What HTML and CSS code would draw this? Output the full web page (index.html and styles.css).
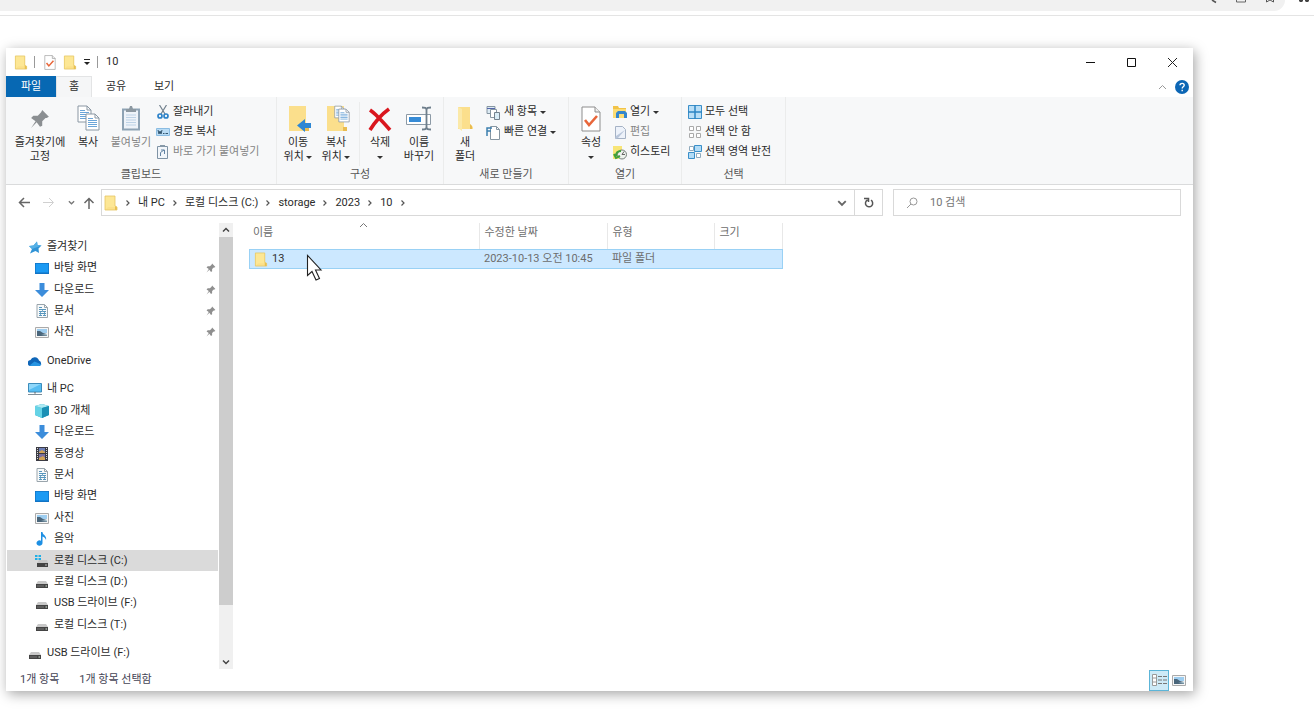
FILE: index.html
```html
<!DOCTYPE html>
<html lang="ko">
<head>
    <meta charset="UTF-8">
    <meta name="viewport" content="width=device-width, initial-scale=1.0">
    <title>10</title>
    <link rel="stylesheet" href="styles.css">
</head>
<body>

<!-- Shared icons -->
<svg class="sprite" aria-hidden="true">
    <symbol id="folder" viewBox="0 0 14 16">
        <path d="M1 1h10v10l2 1v3H1z" fill="#fbe08a"/>
        <path d="M1 1h10v11H4L1 15z" fill="#fde795"/>
        <path d="M11 11l2 1v3h-2z" fill="#e9bf4f"/>
        <path d="M1 1h10v10l2 1v3H1z" fill="none" stroke="#e6c563" stroke-width=".8"/>
    </symbol>
    <symbol id="checkdoc" viewBox="0 0 20 26">
        <path d="M1 1h13l5 5v19H1z" fill="#fff" stroke="#8d8d8d"/>
        <path d="M14 1v5h5" fill="#eee" stroke="#8d8d8d"/>
        <path d="M4 14l4 5 8-9" fill="none" stroke="#e8663a" stroke-width="2.6"/>
    </symbol>
    <symbol id="pin" viewBox="0 0 18 18">
        <path d="M11 1l6 6-2 1-1 0-3 3 0 4-2 1-3-4-5 5 4-6-4-3 2-2 4 0 3-3z" fill="currentColor"/>
    </symbol>
    <symbol id="page" viewBox="0 0 15 18">
        <path d="M1 1h9l4 4v12H1z" fill="#fff" stroke="#8a97a3"/>
        <path d="M10 1v4h4" fill="none" stroke="#8a97a3"/>
        <path d="M3 5.500h5M3 7.500h9M3 9.500h9M3 11.500h9M3 13.500h9" stroke="#6ba5d8"/>
    </symbol>
    <symbol id="chevron" viewBox="0 0 8 8">
        <path d="M1 2.500l3 3 3-3" fill="none" stroke="currentColor" stroke-width="1.500"/>
    </symbol>
    <symbol id="crumb" viewBox="0 0 6 8">
        <path d="M1.500 1.500L4 4 1.500 6.500" fill="none" stroke="#555" stroke-width="1.200"/>
    </symbol>
    <symbol id="star" viewBox="0 0 14 14">
        <path d="M9 1.500l.5 3.500 4 .5-3 3 .5 4.500-3.500-2L2 13.500 4 9 1 6l4.500-.5z" fill="#2f93d6"/>
        <path d="M9 1.500l.5 3.500 4 .5L4 9 1 6l4.500-.5z" fill="#55b0e6"/>
    </symbol>
    <symbol id="desktop" viewBox="0 0 14 14">
        <path d="M0 2h14v11H0z" fill="#1173c4"/>
        <path d="M.7 2.700h12.600v8.800H.7z" fill="#1b9af3"/>
    </symbol>
    <symbol id="download" viewBox="0 0 14 14">
        <path d="M4.500 0h5v7H14l-7 7-7-7h4.500z" fill="#3c8ddb"/>
    </symbol>
    <symbol id="document" viewBox="0 0 14 14">
        <path d="M2 .5h7.500l3 3v10H2z" fill="#f8fafb" stroke="#9aa5ac"/>
        <path d="M9.500.5v3h3" fill="none" stroke="#9aa5ac"/>
        <path d="M4 3.500h3M4 5.500h7M4 7.500h3M8 7.500h3M4 9.500h7M4 11.500h3M8 11.500h3" stroke="#5796bd"/>
        <path d="M7.500 5v3M5.500 8v3M9.500 8v3" stroke="#5796bd" stroke-width=".8"/>
    </symbol>
    <symbol id="picture" viewBox="0 0 14 14">
        <path d="M.5 2.500h13v10H.5z" fill="#f6f6f6" stroke="#aaa"/>
        <path d="M2 4h10v4H2z" fill="#9dcdf0"/>
        <path d="M2 6l3 0 3 2 4 1v2H2z" fill="#49657a"/>
        <path d="M6 10l6-1v1.500z" fill="#b9d2dd"/>
    </symbol>
    <symbol id="cloud" viewBox="0 0 14 14">
        <path d="M3 12a3 3 0 0 1-.5-6 4.500 4.500 0 0 1 8.500.5 3 3 0 0 1 .5 5.500z" fill="#0f66b8"/>
        <path d="M1.500 11.500l5-4 7 3a3 3 0 0 1-2.500 1.500H3z" fill="#2795e2"/>
    </symbol>
    <symbol id="pc" viewBox="0 0 14 14">
        <path d="M.5 1.500h13v8.500H.5z" fill="#56bdf2" stroke="#3c8cbb"/>
        <path d="M1 2h12L1 8z" fill="#8fd7fa"/>
        <path d="M6 10h2v1.500H6zM0 12h14v1H0z" fill="#7f8e98"/>
    </symbol>
    <symbol id="cube" viewBox="0 0 14 14">
        <path d="M7 0l7 2v9l-7 3-7-3V2z" fill="#22a6c5"/>
        <path d="M0 2l7 2v10l-7-3z" fill="#65d3e6"/>
        <path d="M0 2l7-2 7 2-7 2z" fill="#aeeaf3"/>
        <path d="M14 2v9l-7 3V4z" fill="#1b90b5"/>
    </symbol>
    <symbol id="video" viewBox="0 0 14 14">
        <path d="M1 0h12v14H1z" fill="#3b3b43"/>
        <path d="M4 1h6v5H4z" fill="#6d7fb8"/>
        <path d="M4 7h6v6H4z" fill="#7b6fa0"/>
        <path d="M4 5l3-2 3 2v1H4zM4 11l4-2 2 2v2H4z" fill="#d3a354"/>
        <path d="M2.500 1v12M11.500 1v12" stroke="#d9d9d9" stroke-dasharray="1 1"/>
    </symbol>
    <symbol id="music" viewBox="0 0 14 14">
        <path d="M6 0h1.500c0 3 4.500 3.500 3.500 8-.5-2-2-3-3.500-3.500V11a3 2.700 0 1 1-1.500-2.300z" fill="#1d8fe3"/>
    </symbol>
    <symbol id="drive" viewBox="0 0 14 14">
        <path d="M3 6h8l2 3H1z" fill="#c8c8c8"/>
        <path d="M1 9h12v4H1z" fill="#444"/>
        <path d="M2 11h7" stroke="#777"/>
        <path d="M10.500 11H12" stroke="#d8e6d8"/>
    </symbol>
    <symbol id="osdrive" viewBox="0 0 14 14">
        <path d="M4 6h8l1 3H2z" fill="#c8c8c8"/>
        <path d="M2 9h11v4H2z" fill="#444"/>
        <path d="M10 11h2" stroke="#bbb"/>
        <path d="M0 1h2.500v2H0zM3.500 1H6v2H3.500zM0 4h2.500v2H0zM3.500 4H6v2H3.500z" fill="#20afe6"/>
    </symbol>
</svg>

<!-- Bottom edge of the browser toolbar -->
<div class="browser-bar">
    <div class="browser-url">
        <svg width="12" height="4"><path d="M6 0l4 2.500" stroke="#555" stroke-width="1.500"/></svg>
        <svg width="12" height="4"><path d="M1.500 0v2h9V0" fill="none" stroke="#666"/></svg>
        <svg width="12" height="4"><path d="M2.500 0v2l3.500-2 3.500 2V0" fill="none" stroke="#555"/></svg>
    </div>
    <svg class="browser-ext" width="14" height="4"><path d="M1 0h4v1l-1 1H2L1 1zM7 0h4v1l-1 1H8L7 1z" fill="#444"/></svg>
</div>

<main class="window">
    <header class="titlebar">
        <svg width="14" height="15"><use href="#folder"/></svg>
        <span class="title-sep"></span>
        <button class="quick" aria-label="속성"><svg width="14" height="15"><use href="#checkdoc"/></svg></button>
        <button class="quick" aria-label="새 폴더"><svg width="14" height="15"><use href="#folder"/></svg></button>
        <button class="quick" aria-label="빠른 실행 도구 모음"><svg width="8" height="8"><path d="M1 1.500h6" stroke="#222"/><path d="M1 4h6L4 7z" fill="#222"/></svg></button>
        <span class="title-sep"></span>
        <h1>10</h1>
        <div class="window-buttons">
            <button aria-label="최소화"><svg width="11" height="11"><path d="M1 5.500h9" stroke="#111"/></svg></button>
            <button aria-label="최대화"><svg width="11" height="11"><path d="M1.500 1.500h8v8h-8z" fill="none" stroke="#111"/></svg></button>
            <button aria-label="닫기"><svg width="11" height="11"><path d="M1 1l9 9M10 1l-9 9" stroke="#222"/></svg></button>
        </div>
    </header>

    <nav class="tabs">
        <button class="tab file">파일</button>
        <button class="tab active">홈</button>
        <button class="tab">공유</button>
        <button class="tab">보기</button>
        <div class="tab-tools">
            <button aria-label="리본 최소화"><svg width="9" height="8"><path d="M1 6l3.500-3.500L8 6" fill="none" stroke="#999"/></svg></button>
            <button aria-label="도움말"><svg width="14" height="14" viewBox="0 0 14 14"><circle cx="7" cy="7" r="7" fill="#0c66b5"/><path d="M5 5.200c0-2.500 4.200-2.300 4.200 0C9.200 6.800 7.200 6.800 7.200 8.500M7.200 9.800v1.400" fill="none" stroke="#fff" stroke-width="1.400"/></svg></button>
        </div>
    </nav>

    <section class="ribbon">
        <div class="group clipboard">
            <div class="tools">
                <button class="big wide"><svg class="gray" width="20" height="20"><use href="#pin"/></svg><span>즐겨찾기에<br>고정</span></button>
                <button class="big"><svg width="24" height="28" viewBox="0 0 24 28"><use href="#page" x="1" y="0" width="15" height="18"/><use href="#page" x="9" y="8" width="15" height="18"/></svg><span>복사</span></button>
                <button class="big paste" disabled><svg width="20" height="28" viewBox="0 0 20 28"><path d="M2 4.500h16v20H2z" fill="#eef3f9" stroke="#8ea3b5" stroke-width="2"/><path d="M5 10h10M5 12.500h10M5 15h10M5 17.500h10M5 20h10" stroke="#bdd2e6"/><path d="M5 4h3l1-3h2l1 3h3v3H5z" fill="#8c98a1"/></svg><span>붙여넣기</span></button>
                <div class="small-list">
                    <button><svg width="14" height="14" viewBox="0 0 14 14"><path d="M3.500 0l5.500 9M10.500 0L5 9" stroke="#72818e" stroke-width="1.200"/><circle cx="4" cy="11" r="2" fill="none" stroke="#2c82c9" stroke-width="1.700"/><circle cx="10" cy="11" r="2" fill="none" stroke="#2c82c9" stroke-width="1.700"/></svg>잘라내기</button>
                    <button><svg width="14" height="14" viewBox="0 0 14 14"><path d="M.5 3.500h13v7H.5z" fill="#b9dcf5" stroke="#8abce2"/><path d="M2 5l1 4 1-3 1 3 1-4M7 8.500h1.500M9.500 8.500H12" fill="none" stroke="#31546e"/></svg>경로 복사</button>
                    <button disabled><svg width="14" height="16" viewBox="0 0 14 16"><path d="M1.500 2.500h10v12h-10z" fill="#f2f6fa" stroke="#7f93a5"/><path d="M4 1h5v2H4z" fill="#8799a8"/><path d="M4.500 12V8.500L8 6M5 6h3.500v4" fill="none" stroke="#6383a3"/></svg>바로 가기 붙여넣기</button>
                </div>
            </div>
            <h2>클립보드</h2>
        </div>
        <div class="group">
            <div class="tools">
                <button class="big narrow"><svg width="26" height="28" viewBox="0 0 26 28"><path d="M4 1h17v22l3 3H4z" fill="#fbdf8c"/><path d="M20 22h4v4h-4z" fill="#e9bc51"/><path d="M26 18h-6v-4l-8 6.500 8 6.500v-4h6z" fill="#2d87d4"/></svg><span>이동<br>위치 <i class="caret"></i></span></button>
                <button class="big narrow"><svg width="28" height="28" viewBox="0 0 28 28"><path d="M5 1h17v22l3 3H5z" fill="#fbdf8c"/><path d="M21 22h4v4h-4z" fill="#e9bc51"/><use href="#page" x="12" y="0" width="11" height="14"/><use href="#page" x="16" y="3" width="12" height="15"/></svg><span>복사<br>위치 <i class="caret"></i></span></button>
                <span class="divider"></span>
                <button class="big"><svg width="24" height="28" viewBox="0 0 24 28"><path d="M2 5c6 4 13 12 20 20M21 4C14 9 7 17 2 25" fill="none" stroke="#d9161e" stroke-width="3.600"/></svg><span>삭제<br><i class="caret"></i></span></button>
                <button class="big narrow"><svg width="26" height="28" viewBox="0 0 26 28"><path d="M.5 9.500h24v10H.5z" fill="#fff" stroke="#8c9aa6"/><path d="M3 12h12v5H3z" fill="#368bd6"/><path d="M16 2.500c3 0 4.500 0 4.500 3v16c0 3-1.500 3-4.500 3M25 2.500c-3 0-4.500 0-4.500 3v16c0 3 1.500 3 4.500 3" fill="none" stroke="#6f7f8c" stroke-width="1.800"/></svg><span>이름<br>바꾸기</span></button>
            </div>
            <h2>구성</h2>
        </div>
        <div class="group">
            <div class="tools">
                <button class="big narrow"><svg width="18" height="26" viewBox="0 0 18 26"><path d="M2 2h12v17l3 3v2H2z" fill="#fbdf8c"/><path d="M2 2l4 2v22l-4-3z" fill="#fbe9a8"/><path d="M14 19l2 2v3h-2z" fill="#e9bc51"/></svg><span>새<br>폴더</span></button>
                <div class="small-list">
                    <button><svg width="15" height="15" viewBox="0 0 15 15"><path d="M1 1.500h8v7H1z" fill="#dcebf4" stroke="#8696a2"/><path d="M1 3.500h8" stroke="#56a"/><path d="M4.500 4.500h6v8h-6z" fill="#fff" stroke="#8696a2"/><path d="M8.500 7.500h5v7h-5z" fill="#d9edf7" stroke="#74828e"/></svg>새 항목 <i class="caret"></i></button>
                    <button><svg width="15" height="15" viewBox="0 0 15 15"><path d="M4.500 1.500h6l3 3v10h-9z" fill="#fff" stroke="#8696a2"/><path d="M10.500 1.500v3h3" fill="none" stroke="#8696a2"/><path d="M1 11V3h5M1 6h4" fill="none" stroke="#3c7fae" stroke-width="1.500"/></svg>빠른 연결 <i class="caret"></i></button>
                </div>
            </div>
            <h2>새로 만들기</h2>
        </div>
        <div class="group">
            <div class="tools">
                <button class="big"><svg width="20" height="28" viewBox="0 0 20 28"><use href="#checkdoc" y="1" width="20" height="26"/></svg><span>속성<br><i class="caret"></i></span></button>
                <div class="small-list">
                    <button><svg width="14" height="14" viewBox="0 0 14 14"><path d="M0 1h5l1 2h7v10H0z" fill="#f2c348"/><path d="M0 4h13v9H0z" fill="#fbdc74"/><path d="M3 13V8l2-2h7l2 2v5h-3v-4H6v4z" fill="#3386cd"/></svg>열기 <i class="caret"></i></button>
                    <button disabled><svg width="14" height="15" viewBox="0 0 14 15"><path d="M2.500 1.500h7l3 3v9h-10z" fill="#edf2fa" stroke="#a5b2c5"/><path d="M12 5l-7 8-3 1 1-3z" fill="#b9c6da"/></svg>편집</button>
                    <button><svg width="14" height="15" viewBox="0 0 14 15"><path d="M0 1h9v9l-3 4H0z" fill="#f8e577"/><circle cx="9" cy="9.500" r="4.500" fill="#eef3ee" stroke="#75807a"/><path d="M9 9.500l2-3M9 9.500h3" fill="none" stroke="#666"/><path d="M3 11c0-3 2-5 5-5M1 9l2 4 4-2" fill="none" stroke="#41a03b" stroke-width="2"/></svg>히스토리</button>
                </div>
            </div>
            <h2>열기</h2>
        </div>
        <div class="group">
            <div class="tools">
                <div class="small-list first">
                    <button><svg width="14" height="14" viewBox="0 0 14 14"><path d="M.5.5h13v13H.5z" fill="#b9def6" stroke="#3a8fc9"/><path d="M7 0v14M0 7h14" stroke="#2d85c3" stroke-width="1.500"/></svg>모두 선택</button>
                    <button><svg width="14" height="14" viewBox="0 0 14 14"><path d="M1.500 1.500h4v4h-4zM8.500 1.500h4v4h-4zM1.500 8.500h4v4h-4zM8.500 8.500h4v4h-4z" fill="#fff" stroke="#aaa"/></svg>선택 안 함</button>
                    <button><svg width="14" height="14" viewBox="0 0 14 14"><path d="M1.500 1.500h4v4h-4zM8.500 8.500h4v4h-4z" fill="#fff" stroke="#8faabd"/><path d="M6.500.5h7v6h-7zM.5 7.500h6v6h-6z" fill="#b2dcf7" stroke="#3a8fc9"/></svg>선택 영역 반전</button>
                </div>
            </div>
            <h2>선택</h2>
        </div>
    </section>

    <div class="address-row">
        <div class="history">
            <button aria-label="뒤로"><svg width="12" height="11"><path d="M6 1L1.500 5.500 6 10M2 5.500h10" fill="none" stroke="#666" stroke-width="1.500"/></svg></button>
            <button aria-label="앞으로" disabled><svg width="12" height="11"><path d="M6 1l4.500 4.500L6 10M0 5.500h10" fill="none" stroke="#d0d0d0"/></svg></button>
            <button aria-label="최근 위치" class="recent"><svg width="7" height="7"><use href="#chevron"/></svg></button>
            <button aria-label="위로" class="up"><svg width="12" height="12"><path d="M1.500 6L6 1.500 10.500 6M6 2v10" fill="none" stroke="#666" stroke-width="1.500"/></svg></button>
        </div>
        <div class="address">
            <svg width="14" height="16"><use href="#folder"/></svg>
            <svg width="6" height="8"><use href="#crumb"/></svg>
            <a href="#">내 PC</a>
            <svg width="6" height="8"><use href="#crumb"/></svg>
            <a href="#">로컬 디스크 (C:)</a>
            <svg width="6" height="8"><use href="#crumb"/></svg>
            <a href="#">storage</a>
            <svg width="6" height="8"><use href="#crumb"/></svg>
            <a href="#">2023</a>
            <svg width="6" height="8"><use href="#crumb"/></svg>
            <a href="#">10</a>
            <svg width="6" height="8"><use href="#crumb"/></svg>
            <button class="drop" aria-label="이전 위치"><svg width="10" height="10"><use href="#chevron"/></svg></button>
            <button class="refresh" aria-label="새로 고침"><svg width="10" height="11" viewBox="0 0 10 11"><path d="M7 3.200A3.600 3.600 0 1 1 3.500 3M0 1.500h4.500V5" fill="none" stroke="#555" stroke-width="1.500"/></svg></button>
        </div>
        <label class="search">
            <svg width="12" height="12"><circle cx="7.500" cy="4.500" r="3.500" fill="none" stroke="#999"/><path d="M5 7l-4 4" stroke="#999"/></svg>
            <input type="search" placeholder="10 검색" aria-label="10 검색">
        </label>
    </div>

    <div class="content">
        <ul class="tree">
            <li class="root"><a href="#"><svg><use href="#star"/></svg>즐겨찾기</a></li>
            <li><a href="#"><svg><use href="#desktop"/></svg>바탕 화면</a><svg class="pin"><use href="#pin"/></svg></li>
            <li><a href="#"><svg><use href="#download"/></svg>다운로드</a><svg class="pin"><use href="#pin"/></svg></li>
            <li><a href="#"><svg><use href="#document"/></svg>문서</a><svg class="pin"><use href="#pin"/></svg></li>
            <li><a href="#"><svg><use href="#picture"/></svg>사진</a><svg class="pin"><use href="#pin"/></svg></li>
            <li class="root"><a href="#"><svg><use href="#cloud"/></svg>OneDrive</a></li>
            <li class="root"><a href="#"><svg><use href="#pc"/></svg>내 PC</a></li>
            <li><a href="#"><svg><use href="#cube"/></svg>3D 개체</a></li>
            <li><a href="#"><svg><use href="#download"/></svg>다운로드</a></li>
            <li><a href="#"><svg><use href="#video"/></svg>동영상</a></li>
            <li><a href="#"><svg><use href="#document"/></svg>문서</a></li>
            <li><a href="#"><svg><use href="#desktop"/></svg>바탕 화면</a></li>
            <li><a href="#"><svg><use href="#picture"/></svg>사진</a></li>
            <li><a href="#"><svg><use href="#music"/></svg>음악</a></li>
            <li class="selected"><a href="#"><svg><use href="#osdrive"/></svg>로컬 디스크 (C:)</a></li>
            <li><a href="#"><svg><use href="#drive"/></svg>로컬 디스크 (D:)</a></li>
            <li><a href="#"><svg><use href="#drive"/></svg>USB 드라이브 (F:)</a></li>
            <li><a href="#"><svg><use href="#drive"/></svg>로컬 디스크 (T:)</a></li>
            <li class="root"><a href="#"><svg><use href="#drive"/></svg>USB 드라이브 (F:)</a></li>
        </ul>
        <div class="scrollbar">
            <svg class="flip" width="8" height="8"><use href="#chevron"/></svg>
            <div class="track"><div class="thumb"></div></div>
            <svg width="8" height="8"><use href="#chevron"/></svg>
        </div>
        <div class="files">
            <table>
                <thead>
                    <tr>
                        <th class="name">이름<svg class="sort" width="9" height="6"><path d="M1 5l3.500-3.500L8 5" fill="none" stroke="#777"/></svg></th>
                        <th class="date">수정한 날짜</th>
                        <th class="type">유형</th>
                        <th class="size">크기</th>
                    </tr>
                </thead>
                <tbody>
                    <tr class="selected">
                        <td><a href="#"><svg width="14" height="15"><use href="#folder"/></svg>13</a></td>
                        <td>2023-10-13 오전 10:45</td>
                        <td>파일 폴더</td>
                        <td></td>
                    </tr>
                </tbody>
            </table>
            <svg class="cursor" width="18" height="29" viewBox="0 0 18 29"><path d="M1.500 1.500v20l4.500-4 4 8.500 3.500-1.500-4-8.500H15z" fill="#fff" stroke="#222" stroke-width="1.100"/></svg>
        </div>
    </div>

    <footer class="status">
        <span>1개 항목</span>
        <span>1개 항목 선택함</span>
        <div class="views">
            <button class="on" aria-label="자세히"><svg width="15" height="13"><path d="M.5.5h4v11h-4zM.5 4h4M.5 8h4" fill="#fff" stroke="#9a9a9a"/><path d="M6 2.500h4M11 2.500h4M6 6h4M11 6h4M6 9.500h4M11 9.500h4" stroke="#777"/></svg></button>
            <button aria-label="큰 아이콘"><svg width="14" height="14"><use href="#picture"/></svg></button>
        </div>
    </footer>
</main>

</body>
</html>
```
FILE: styles.css
```css
* {
    box-sizing: border-box;
}

body {
    margin: 0;
    background: #fff;
    color: #2b2b2b;
    font-family: Roboto, "Noto Sans CJK KR", sans-serif;
    font-size: 11px;
    line-height: 14px;
}

button {
    display: flex;
    align-items: center;
    justify-content: center;
    padding: 0;
    border: none;
    background: none;
    color: inherit;
    font: inherit;
}

a {
    color: inherit;
    text-decoration: none;
}

svg {
    flex: none;
}

.sprite {
    display: none;
}

/* Browser toolbar */
.browser-bar {
    display: flex;
    height: 16px;
    border-bottom: 1px solid #e4e4e4;
}

.browser-url {
    display: flex;
    flex: 1;
    justify-content: flex-end;
    gap: 17px;
    height: 11px;
    padding-right: 9px;
    background: #f1f1f1;
    border-radius: 0 0 12px 0;
}

.browser-ext {
    margin: 0 2px 0 13px;
}

/* Window */
.window {
    display: flex;
    flex-direction: column;
    min-height: calc(100vh - 84px);
    margin: 32px 121px 36px 6px;
    background: #fff;
    box-shadow: 2px 3px 12px rgba(0, 0, 0, 0.36);
}

.titlebar {
    display: flex;
    align-items: center;
    gap: 6px;
    height: 28px;
    padding-left: 8px;
}

.title-sep {
    width: 1px;
    height: 12px;
    margin-right: 2px;
    background: #999;
}

.titlebar h1 {
    margin: 0;
    font-size: 11px;
    font-weight: normal;
}

.window-buttons {
    display: flex;
    margin-left: auto;
}

.window-buttons button {
    width: 41px;
    height: 28px;
}

/* Tabs */
.tabs {
    display: flex;
    height: 21px;
}

.tab {
    width: 48px;
}

.tab.file {
    width: 50px;
    background: #0768b3;
    color: #fff;
}

.tab.active {
    width: 36px;
    background: #f5f6f7;
    border: 1px solid #e3e4e5;
    border-bottom: none;
}

.tab-tools {
    display: flex;
    gap: 8px;
    margin-left: auto;
    padding-right: 4px;
}

/* Ribbon */
.ribbon {
    display: grid;
    grid-template-columns: 271px 167px 125px 113px 104px;
    height: 88px;
    background: #f7f8f9;
    border-bottom: 1px solid #dadbdc;
}

.group {
    display: flex;
    flex-direction: column;
    padding-top: 5px;
    border-right: 1px solid #ebecec;
}

.group h2 {
    margin: 0;
    color: #555;
    font-size: 11px;
    font-weight: normal;
    line-height: 18px;
    text-align: center;
}

.tools {
    display: flex;
    height: 64px;
    padding-left: 2px;
}

.clipboard .tools {
    padding-left: 6px;
}

.big {
    flex-direction: column;
    justify-content: flex-start;
    width: 40px;
    padding-top: 3px;
    white-space: nowrap;
}

.big.wide {
    width: 56px;
}

.big.paste {
    width: 46px;
}

.big.narrow {
    width: 38px;
}

.big span {
    margin-top: auto;
    height: 30px;
}

.gray {
    margin-top: 4px;
    color: #8b8f92;
}

.divider {
    width: 1px;
    margin-left: 4px;
    background: #ebecec;
}

.small-list {
    display: flex;
    flex-direction: column;
    padding-left: 2px;
}

.small-list.first {
    padding-left: 4px;
}

.small-list button {
    justify-content: flex-start;
    gap: 3px;
    height: 20px;
    white-space: nowrap;
}

button:disabled {
    color: #858585;
}

.caret {
    display: inline-block;
    border: 3px solid transparent;
    border-top-color: #333;
    border-bottom: none;
    vertical-align: middle;
}

/* Address bar */
.address-row {
    display: flex;
    padding: 4px 12px 0 11px;
}

.history {
    display: flex;
    width: 84px;
    color: #777;
}

.history button {
    width: 14px;
    margin-right: 11px;
}

.history .recent {
    width: 8px;
    margin-right: 7px;
}

.history .up {
    margin: 0;
}

.address,
.search {
    display: flex;
    align-items: center;
    height: 27px;
    border: 1px solid #d9d9d9;
}

.address {
    flex: 1;
    gap: 7px;
    padding-left: 2px;
}

.address .drop {
    margin-left: auto;
    color: #666;
}

.address .refresh {
    align-self: stretch;
    width: 28px;
    border-left: 1px solid #d9d9d9;
}

.search {
    width: 288px;
    margin-left: 10px;
    padding-left: 12px;
    gap: 12px;
}

.search input {
    flex: 1;
    padding: 0;
    border: none;
    outline: none;
    background: none;
    font: inherit;
}

.search input::placeholder {
    color: #757575;
}

/* Folder tree */
.content {
    display: flex;
    flex: 1;
    padding-top: 7px;
}

.tree {
    display: flex;
    flex-direction: column;
    width: 213px;
    margin: 0;
    padding: 13px 1px 5px;
    list-style: none;
}

.tree li {
    display: flex;
    flex: 1;
    align-items: center;
    justify-content: space-between;
    padding: 0 2px 0 28px;
}

.tree .root {
    margin-top: 7px;
    padding-left: 21px;
}

.tree .root:first-child {
    margin-top: 0;
}

.tree .selected {
    background: #dadada;
}

.tree a {
    display: flex;
    align-items: center;
    gap: 5px;
}

.tree svg {
    width: 14px;
    height: 14px;
}

.tree .pin {
    width: 10px;
    height: 10px;
    color: #8f8f8f;
}

.scrollbar {
    display: flex;
    flex-direction: column;
    align-items: center;
    width: 14px;
    padding: 3px 0;
    background: #f0f0f0;
    color: #444;
}

.flip {
    transform: rotate(180deg);
}

.track {
    flex: 1;
    align-self: stretch;
    margin: 3px 0;
}

.thumb {
    height: 88%;
    background: #cdcdcd;
}

/* File list */
.files {
    position: relative;
    flex: 1;
    padding-left: 16px;
}

table {
    width: 534px;
    border-collapse: collapse;
    table-layout: fixed;
    color: #6d6d6d;
}

th {
    position: relative;
    height: 26px;
    padding: 0 0 6px 5px;
    border-right: 1px solid #e8e8e8;
    font-weight: normal;
    text-align: left;
}

.name {
    width: 230px;
    padding-left: 4px;
}

.date {
    width: 128px;
}

.type {
    width: 107px;
}

.sort {
    position: absolute;
    top: -1px;
    left: calc(50% - 5px);
}

td {
    height: 20px;
    padding: 0 0 0 5px;
}

td a {
    display: flex;
    align-items: center;
    gap: 4px;
    color: #333;
}

tbody .selected {
    background: #cce8ff;
    outline: 1px solid #99d1f5;
    outline-offset: -1px;
}

.cursor {
    position: absolute;
    top: 31px;
    left: 73px;
}

/* Status bar */
.status {
    display: flex;
    align-items: center;
    gap: 20px;
    height: 22px;
    padding-left: 14px;
    color: #445;
}

.views {
    display: flex;
    gap: 3px;
    margin-left: auto;
    padding-right: 7px;
}

.views .on {
    width: 20px;
    height: 21px;
    background: #cdeaf7;
    border: 1px solid #5cb5d8;
}
```
